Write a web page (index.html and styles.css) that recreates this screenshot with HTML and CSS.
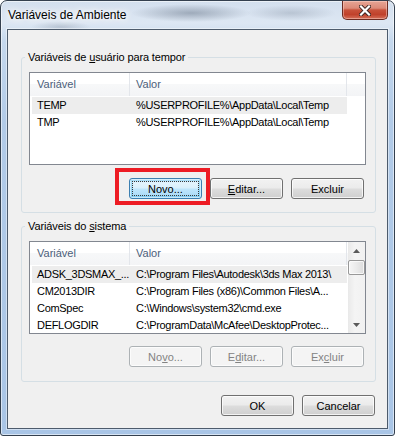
FILE: index.html
```html
<!DOCTYPE html>
<html lang="pt">
<head>
<meta charset="utf-8">
<title>Variáveis de Ambiente</title>
<link rel="stylesheet" href="styles.css">
</head>
<body>
<div class="window">
  <div class="titlebar">
    <span class="title">Variáveis de Ambiente</span>
    <button class="close" aria-label="Fechar">
      <svg width="12" height="11" viewBox="0 0 12 11">
        <path d="M2 1.5 L10 9.5 M10 1.5 L2 9.5" stroke="#3a2320" stroke-width="4" stroke-linecap="square" fill="none"/>
        <path d="M2 1.5 L10 9.5 M10 1.5 L2 9.5" stroke="#ffffff" stroke-width="2.2" stroke-linecap="square" fill="none"/>
      </svg>
    </button>
  </div>
  <div class="client">
    <fieldset class="group g1">
      <legend>Variáveis de <u>u</u>suário para tempor</legend>
      <div class="list">
        <div class="lmain">
          <div class="lhead">
            <div class="hc c1">Variável</div>
            <div class="hc c2">Valor</div>
            <div class="hc c3"></div>
          </div>
          <div class="rows">
            <div class="row sel"><span class="c1">TEMP</span><span class="c2">%USERPROFILE%\AppData\Local\Temp</span></div>
            <div class="row"><span class="c1">TMP</span><span class="c2">%USERPROFILE%\AppData\Local\Temp</span></div>
          </div>
        </div>
      </div>
      <div class="btns">
        <button class="btn default"><span class="focus">Novo...</span></button>
        <button class="btn"><u>E</u>ditar...</button>
        <button class="btn">Excluir</button>
      </div>
    </fieldset>
    <fieldset class="group g2">
      <legend>Variáveis do <u>s</u>istema</legend>
      <div class="list">
        <div class="lmain">
          <div class="lhead">
            <div class="hc c1">Variável</div>
            <div class="hc c2">Valor</div>
            <div class="hc c3"></div>
          </div>
          <div class="rows">
            <div class="row sel"><span class="c1">ADSK_3DSMAX_...</span><span class="c2">C:\Program Files\Autodesk\3ds Max 2013\</span></div>
            <div class="row"><span class="c1">CM2013DIR</span><span class="c2">C:\Program Files (x86)\Common Files\A...</span></div>
            <div class="row"><span class="c1">ComSpec</span><span class="c2">C:\Windows\system32\cmd.exe</span></div>
            <div class="row"><span class="c1">DEFLOGDIR</span><span class="c2">C:\ProgramData\McAfee\DesktopProtec...</span></div>
          </div>
        </div>
        <div class="scroll">
          <div class="sbtn"><svg width="7" height="4" viewBox="0 0 7 4"><path d="M0 4 L3.5 0 L7 4 Z" fill="#5a5a5a"/></svg></div>
          <div class="track"><div class="thumb"></div></div>
          <div class="sbtn"><svg width="7" height="4" viewBox="0 0 7 4"><path d="M0 0 L3.5 4 L7 0 Z" fill="#5a5a5a"/></svg></div>
        </div>
      </div>
      <div class="btns">
        <button class="btn" disabled>No<u>v</u>o...</button>
        <button class="btn" disabled>E<u>d</u>itar...</button>
        <button class="btn" disabled>Ex<u>c</u>luir</button>
      </div>
    </fieldset>
    <div class="btns dlg">
      <button class="btn">OK</button>
      <button class="btn">Cancelar</button>
    </div>
  </div>
  <div class="annot"></div>
</div>
</body>
</html>
```
FILE: styles.css
```css
* { box-sizing: border-box; }

body {
  margin: 0;
  background: #ffffff;
  font-family: "Liberation Sans", Arial, sans-serif;
  font-size: 11px;
  color: #000;
}

.window {
  position: relative;
  width: 395px;
  height: 436px;
  border: 1px solid #34404f;
  border-radius: 7px 7px 3px 3px;
  padding: 0 6px 6px;
  display: flex;
  flex-direction: column;
  background:
    radial-gradient(ellipse 60px 9px at 190px 12px, rgba(70, 85, 105, .4), rgba(70, 85, 105, 0)),
    radial-gradient(ellipse 45px 8px at 290px 12px, rgba(70, 85, 105, .22), rgba(70, 85, 105, 0)),
    radial-gradient(ellipse 30px 6px at 60px 26px, rgba(70, 85, 105, .22), rgba(70, 85, 105, 0)),
    linear-gradient(180deg, #d3dfee 0, #dde7f3 22px, #c5d8ed 40px, #b2cbe8 120px, #a9c5e6 100%);
  box-shadow: inset 0 0 0 1px rgba(255, 255, 255, .55);
}

.titlebar {
  height: 28px;
  display: flex;
  justify-content: space-between;
  align-items: flex-start;
}

.title {
  font-size: 12px;
  line-height: 15px;
  padding: 7px 0 0 1px;
  text-shadow: 0 0 5px #fff, 0 0 9px #fff, 0 0 12px #fff;
}

.close {
  width: 46px;
  height: 19px;
  padding: 0;
  border: 1px solid #6b2b22;
  border-top: none;
  border-radius: 0 0 5px 5px;
  display: flex;
  align-items: center;
  justify-content: center;
  background: linear-gradient(180deg, #e6a595 0%, #dc8a78 40%, #c8513a 50%, #c0412b 75%, #d5705a 100%);
  box-shadow: inset 0 0 0 1px rgba(255, 220, 210, .45);
}

.client {
  flex: 1;
  border: 1px solid #4d5b6c;
  background: #f0f0f0;
  padding: 20px 11px 12px 13px;
  display: flex;
  flex-direction: column;
  box-shadow: 0 0 0 1px rgba(255, 255, 255, .45);
}

.group {
  margin: 0;
  min-width: 0;
  border: 1px solid #d5dfe5;
  border-radius: 3px;
  padding: 8px 9px 13px 7px;
}

.g2 {
  margin-top: 6px;
  padding-bottom: 14px;
}

legend {
  padding: 0 3px;
  margin-left: -4px;
  line-height: 14px;
  letter-spacing: -0.12px;
}

.list {
  height: 93px;
  border: 1px solid #828790;
  background: #fff;
  display: flex;
}

.lmain {
  flex: 1;
  min-width: 0;
  overflow: hidden;
}

.lhead {
  height: 23px;
  display: flex;
  color: #4c607a;
  background: linear-gradient(180deg, #ffffff 0, #ffffff 50%, #f7f8f9 50%, #f3f4f6 100%);
}

.hc {
  line-height: 23px;
  border-right: 1px solid #e3e6eb;
  white-space: nowrap;
}

.hc.c1 { width: 100px; padding-left: 7px; }
.hc.c2 { width: 217px; padding-left: 6px; }
.hc.c3 { flex: 1; border-right: none; }

.rows { padding-top: 1px; }

.row {
  display: flex;
  height: 17px;
  line-height: 17px;
  margin-left: 2px;
  width: 315px;
  white-space: nowrap;
  letter-spacing: -0.3px;
}

.row.sel { background: #ededed; }

.row .c1 { width: 98px; padding-left: 5px; overflow: hidden; }
.row .c2 { flex: 1; padding-left: 6px; overflow: hidden; }

.scroll {
  width: 17px;
  display: flex;
  flex-direction: column;
  background: linear-gradient(90deg, #e9e9e9 0, #f4f4f4 40%, #f1f1f1 100%);
}

.sbtn {
  height: 17px;
  display: flex;
  align-items: center;
  justify-content: center;
}

.track { flex: 1; }

.thumb {
  height: 15px;
  margin: 1px 0 0 0;
  border: 1px solid #989898;
  border-radius: 2px;
  background: linear-gradient(90deg, #f6f6f6 0, #eaeaea 50%, #dcdcdc 100%);
  box-shadow: inset 0 0 0 1px rgba(255, 255, 255, .7);
}

.btns {
  display: flex;
  justify-content: flex-end;
  gap: 8px;
  margin-top: 13px;
  padding-right: 2px;
}

.g2 .btns { margin-top: 12px; }

.dlg {
  margin-top: 13px;
  padding-right: 1px;
}

.btn {
  width: 73px;
  height: 21px;
  padding: 0;
  font-family: inherit;
  font-size: 11px;
  color: #000;
  border: 1px solid #707070;
  border-radius: 3px;
  background: linear-gradient(180deg, #f2f2f2 0%, #ebebeb 48%, #dddddd 52%, #cfcfcf 100%);
  box-shadow: inset 0 0 0 1px rgba(255, 255, 255, .75);
  display: flex;
  align-items: center;
  justify-content: center;
}

.btn.default {
  border-color: #3c7fb1;
  background: linear-gradient(180deg, #eaf6fd 0%, #d9f0fc 48%, #bee6fd 52%, #a7d9f5 100%);
  box-shadow: inset 0 0 0 1px rgba(255, 255, 255, .6), inset 0 0 2px 2px rgba(80, 190, 240, .55);
  padding: 2px;
}

.focus {
  flex: 1;
  align-self: stretch;
  display: flex;
  align-items: center;
  justify-content: center;
  border: 1px dotted #3a3a3a;
}

.btn:disabled {
  color: #838383;
  border-color: #adb2b5;
  background: #f4f4f4;
  box-shadow: inset 0 0 0 1px #fcfcfc;
}

.annot {
  position: absolute;
  left: 114px;
  top: 167px;
  width: 95px;
  height: 37px;
  border: 4px solid #ed1c24;
}
```
